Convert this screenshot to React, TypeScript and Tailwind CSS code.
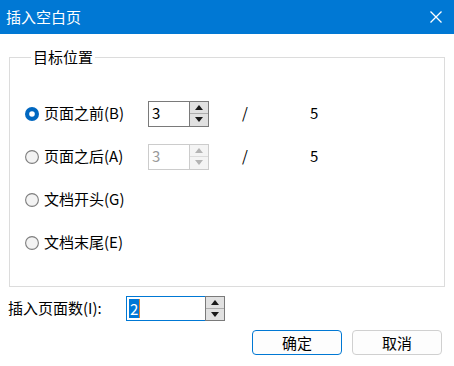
import React from "react";

const font = { fontFamily: '"Microsoft YaHei UI", "Noto Sans CJK SC", "Noto Sans", sans-serif' };

function Radio({ checked }: { checked: boolean }) {
  return (
    <svg width="14" height="14" viewBox="0 0 14 14" className="shrink-0">
      {checked ? (
        <>
          <circle cx="7" cy="7" r="7" fill="#0067c0" />
          <circle cx="7" cy="7" r="2.8" fill="#ffffff" />
        </>
      ) : (
        <circle cx="7" cy="7" r="6.4" fill="#f3f3f3" stroke="#7d7d7d" strokeWidth="1.1" />
      )}
    </svg>
  );
}

function Arrow({ up, disabled }: { up: boolean; disabled?: boolean }) {
  return (
    <svg width="8" height="5" viewBox="0 0 8 5">
      <polygon points={up ? "0,5 8,5 4,0" : "0,0 8,0 4,5"} fill={disabled ? "#b4b4b4" : "#1a1a1a"} />
    </svg>
  );
}

function SpinButtons({ disabled }: { disabled?: boolean }) {
  return (
    <div
      className={`flex flex-col w-[20px] border ${
        disabled ? "border-[#cccccc] bg-[#f4f4f4]" : "border-[#7a7a7a] bg-[#e1e1e1]"
      }`}
    >
      <div
        className={`flex-1 flex items-center justify-center border-b ${
          disabled ? "border-[#dcdcdc]" : "border-[#adadad]"
        }`}
      >
        <Arrow up disabled={disabled} />
      </div>
      <div className="flex-1 flex items-center justify-center">
        <Arrow up={false} disabled={disabled} />
      </div>
    </div>
  );
}

function Spinner({ value, disabled }: { value: string; disabled?: boolean }) {
  return (
    <div className="flex h-[26px]">
      <div
        className={`w-[41px] border border-r-0 flex items-center pl-[3px] text-[15px] ${
          disabled ? "border-[#cccccc] text-[#9a9a9a]" : "border-[#7a7a7a] text-black"
        }`}
      >
        {value}
      </div>
      <SpinButtons disabled={disabled} />
    </div>
  );
}

const rows = [
  { label: "页面之前(B)", checked: true, spin: true, disabled: false },
  { label: "页面之后(A)", checked: false, spin: true, disabled: true },
  { label: "文档开头(G)", checked: false, spin: false, disabled: false },
  { label: "文档末尾(E)", checked: false, spin: false, disabled: false },
];

export default function App() {
  return (
    <div className="w-[454px] h-[366px] bg-white flex flex-col text-black" style={font}>
      <div className="h-[34px] bg-[#0078d4] flex items-center justify-between pl-[6px] pr-[12px] text-white text-[15px]">
        <span>插入空白页</span>
        <svg width="12" height="12" viewBox="0 0 12 12">
          <path d="M0.5 0.5 L11.5 11.5 M11.5 0.5 L0.5 11.5" stroke="#ffffff" strokeWidth="1.3" />
        </svg>
      </div>

      <fieldset className="mx-[9px] mt-[13px] h-[240px] border border-[#dcdcdc] pl-[15px] pt-[25px]">
        <legend className="ml-[6px] px-[2px] text-[15px] leading-[20px]">目标位置</legend>
        <div className="flex flex-col">
          {rows.map((r) => (
            <div key={r.label} className="h-[43px] flex items-center text-[15px]">
              <div className="w-[123px] flex items-center gap-[5px]">
                <Radio checked={r.checked} />
                <span>{r.label}</span>
              </div>
              {r.spin && (
                <>
                  <Spinner value="3" disabled={r.disabled} />
                  <span className="ml-[33px]">/</span>
                  <span className="ml-[62px]">5</span>
                </>
              )}
            </div>
          ))}
        </div>
      </fieldset>

      <div className="flex items-center mt-[9px] pl-[8px] h-[25px] text-[15px]">
        <span className="w-[118px]">插入页面数(I):</span>
        <div className="flex h-[25px]">
          <div className="w-[79px] border border-r-0 border-[#0078d4] flex items-center pl-[2px]">
            <span className="bg-[#0078d7] text-white leading-[19px] px-[1px]">2</span>
            <span className="w-[1px] h-[19px] bg-[#e8832a]" />
          </div>
          <SpinButtons />
        </div>
      </div>

      <div className="flex justify-end gap-[10px] mt-[9px] pr-[12px]">
        <button className="w-[90px] h-[25px] rounded-[4px] border border-[#0078d4] bg-[#fdfdfd] text-[15px] leading-none">
          确定
        </button>
        <button className="w-[90px] h-[25px] rounded-[4px] border border-[#d0d0d0] bg-[#fdfdfd] text-[15px] leading-none">
          取消
        </button>
      </div>
    </div>
  );
}
